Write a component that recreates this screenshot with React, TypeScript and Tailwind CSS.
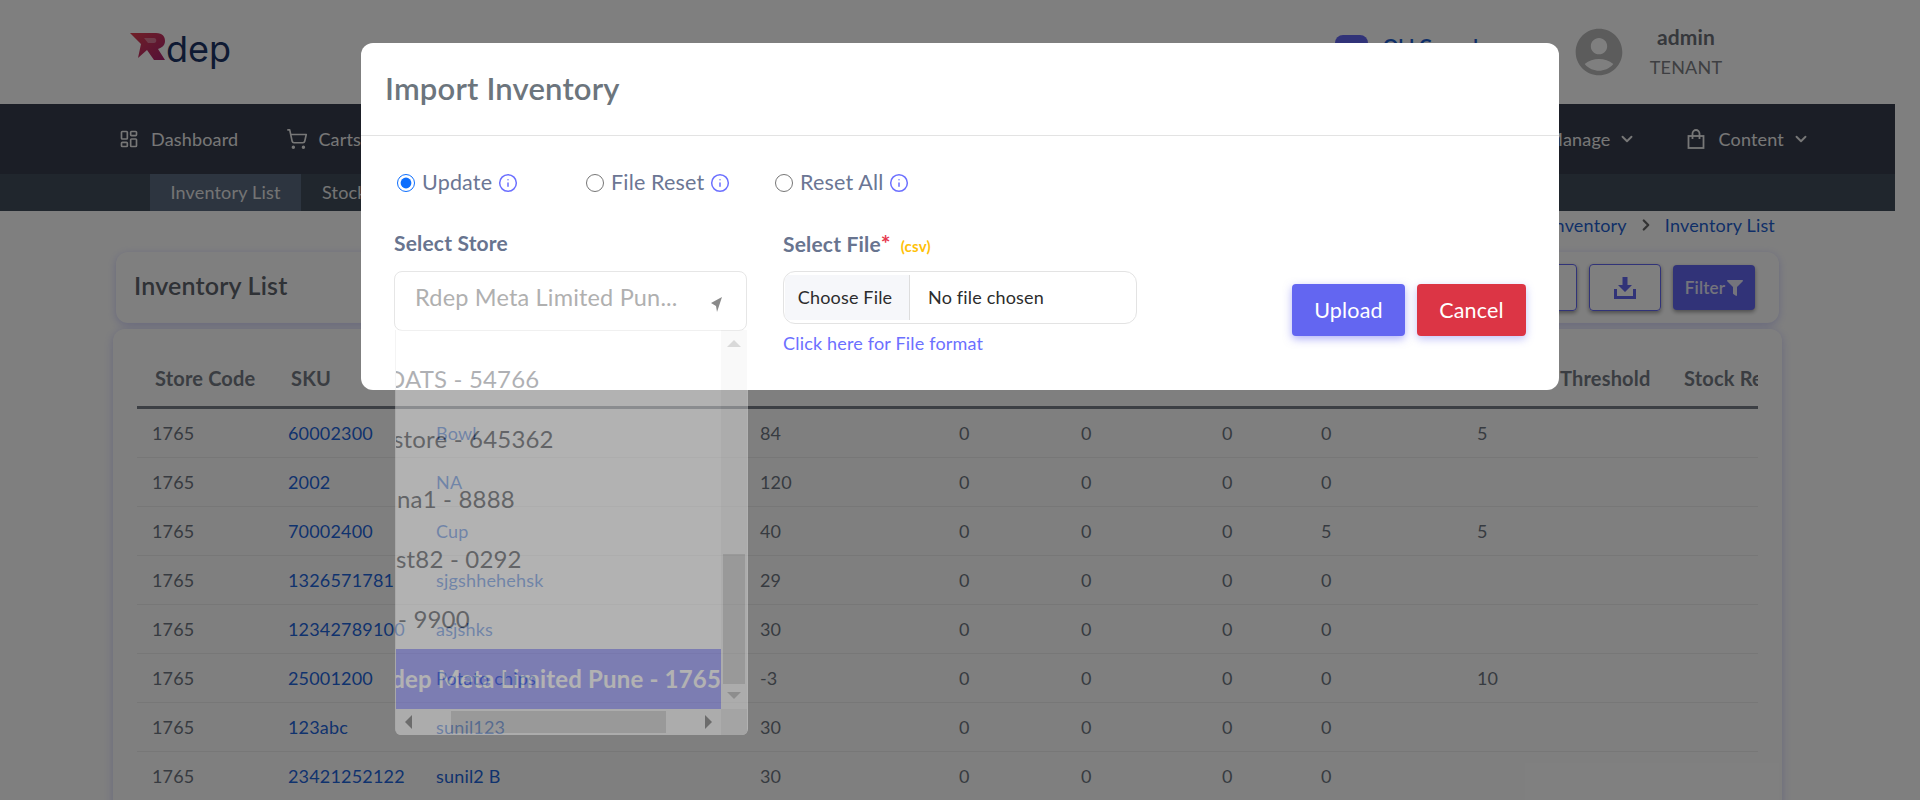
import { ChevronDown, ChevronRight, Info, LayoutDashboard, ShoppingCart } from "lucide-react";
import { FaFilter } from "react-icons/fa";
import { MdAccountCircle } from "react-icons/md";

const rows = [
  ["1765", "60002300", "Bowl", "84", "0", "0", "0", "0", "5"],
  ["1765", "2002", "NA", "120", "0", "0", "0", "0", ""],
  ["1765", "70002400", "Cup", "40", "0", "0", "0", "5", "5"],
  ["1765", "1326571781", "sjgshhehehsk", "29", "0", "0", "0", "0", ""],
  ["1765", "12342789100", "asjshks", "30", "0", "0", "0", "0", ""],
  ["1765", "25001200", "Potato chips", "-3", "0", "0", "0", "0", "10"],
  ["1765", "123abc", "sunil123", "30", "0", "0", "0", "0", ""],
  ["1765", "23421252122", "sunil2 B", "30", "0", "0", "0", "0", ""],
];

const headers = [
  { label: "Store Code", cls: "pl-[18px]" },
  { label: "SKU", cls: "pl-[18px]" },
  { label: "Product Name", cls: "pl-[18px]" },
  { label: "Quantity", cls: "pl-[18px]" },
  { label: "Reserved", cls: "pl-[18px]" },
  { label: "Damaged", cls: "pl-[18px]" },
  { label: "Sold", cls: "pl-[18px]" },
  { label: "Hold", cls: "pl-[18px]" },
  { label: "Threshold", cls: "pl-[98px]" },
  { label: "Stock Reorder", cls: "pl-[13px]" },
];

const gridCols = "grid grid-cols-[136px_148px_324px_199px_122px_141px_99px_156px_209px_87px]";

function BagIcon() {
  return (
    <svg viewBox="0 0 18 20" className="w-[18px] h-[20px]" fill="none" stroke="currentColor" strokeWidth="1.8">
      <rect x="1.5" y="7" width="15" height="12" />
      <path d="M5.5 10V4.5a3.5 3.5 0 0 1 7 0V10" />
    </svg>
  );
}

function NavBar() {
  return (
    <div className="h-[70px] bg-[#363c4c] text-[#eeeeee] flex items-center pl-[119px] pr-[85px]">
      <LayoutDashboard size={20} strokeWidth={2} className="mr-[12px]" />
      <span>Dashboard</span>
      <ShoppingCart size={22} strokeWidth={1.8} className="ml-[48px] mr-[10px]" />
      <span>Carts</span>
      <span className="ml-auto">Manage</span>
      <ChevronDown size={18} strokeWidth={2.5} className="ml-[8px]" />
      <span className="ml-[51px] mr-[13px] text-[#eeeeee]">
        <BagIcon />
      </span>
      <span>Content</span>
      <ChevronDown size={18} strokeWidth={2.5} className="ml-[8px]" />
    </div>
  );
}

function TopHeader() {
  return (
    <div className="h-[104px] flex items-center pl-[130px]">
      <div className="flex items-start h-[40px] -mt-[3px]">
        <svg viewBox="0 0 36 27" className="w-[36px] h-[27px] mt-[2px]">
          <defs>
            <linearGradient id="mark" x1="0" y1="0" x2="1" y2="1">
              <stop offset="0" stopColor="#e2404e" />
              <stop offset="1" stopColor="#a8206e" />
            </linearGradient>
          </defs>
          <path
            d="M0 0H26C33 0 35 4 35 8C35 13 31 15 28 16L35 27H24L17 17L8 25L11 11Z"
            fill="url(#mark)"
          />
          <path d="M14 5H24C27 5 27 10 24 10H18Z" fill="#ffffff" fillOpacity="0.35" />
        </svg>
        <span className="text-[#1c3466] text-[36px] leading-[37px] tracking-normal font-['Inter',sans-serif] font-normal">dep</span>
      </div>
      <div className="ml-auto flex items-center font-bold pr-[172px]">
        <span className="w-[33px] h-[33px] rounded-lg bg-[#6366f1] mr-[15px] -mt-[1px]" />
        <span className="w-[105px] text-[#1f5fd0] text-[19px] whitespace-nowrap mb-[12px]">Old Console</span>
        <MdAccountCircle size={56} className="text-[#b8b8b8] ml-[83px]" />
        <div className="flex flex-col items-center ml-[22px] w-[74px]">
          <span className="text-[21px] leading-[28px] text-[#6d7178]">admin</span>
          <span className="font-normal text-[#7d7f84] mt-[3px]">TENANT</span>
        </div>
      </div>
    </div>
  );
}

function SubNav() {
  return (
    <div className="h-[37px] bg-[#404c5a] text-[#e8e8e8] flex pl-[150px]">
      <span className="h-full w-[151px] bg-[#5a6a80] flex items-center justify-center">Inventory List</span>
      <span className="h-full flex items-center pl-[21px]">Stock</span>
    </div>
  );
}

function ToolCard() {
  return (
    <div className="ml-[116px] w-[1663px] h-[71px] mt-[9px] rounded-xl bg-white shadow-[0_2px_8px_rgba(99,102,241,0.3)] flex items-center pl-[18px] pr-[24px]">
      <span className="text-[25px] font-semibold text-[#5f646c] -mt-[3px]">Inventory List</span>
      <div className="ml-auto flex items-center gap-[12px]">
        <span className="w-[72px] h-[47px] rounded border border-[#6366f1] shadow-[0_2px_4px_rgba(0,0,0,0.4)]" />
        <span className="w-[72px] h-[47px] rounded border border-[#6366f1] shadow-[0_2px_4px_rgba(0,0,0,0.4)] flex items-center justify-center text-[#6366f1]">
          <svg viewBox="0 0 24 24" className="w-[24px] h-[24px]" fill="currentColor">
            <path d="M9.5 1h5v8h4.5L12 16 5 9h4.5Z" />
            <path d="M1 13h3v7h16v-7h3v10H1Z" />
          </svg>
        </span>
        <span className="w-[82px] h-[45px] rounded bg-[#6366f1] shadow-[0_2px_4px_rgba(0,0,0,0.4)] text-[#e8e8f8] text-[17px] font-semibold flex items-center justify-center gap-[2px]">
          Filter
          <FaFilter size={16} />
        </span>
      </div>
    </div>
  );
}

function InventoryTable() {
  return (
    <div className="ml-[113px] w-[1669px] h-[600px] mt-[6px] rounded-xl bg-white shadow-[0_2px_10px_rgba(99,102,241,0.3)] pl-[24px]">
      <div className="w-[1621px] overflow-hidden">
        <div className={`${gridCols} h-[80px] items-end pb-[13px] border-b-[3px] border-[#787e88] font-bold text-[20px] text-[#747a84] whitespace-nowrap`}>
          {headers.map((h) => (
            <span key={h.label} className={h.cls}>
              {h.label}
            </span>
          ))}
        </div>
        {rows.map((row) => (
          <div key={row[1]} className={`${gridCols} h-[49px] items-center border-b border-[#eeeeee] text-[#6f7782]`}>
            {row.map((cell, i) => (
              <span key={i} className={i === 1 || i === 2 ? "pl-[15px] text-[#1f66dc] whitespace-nowrap" : "pl-[15px]"}>
                {cell}
              </span>
            ))}
          </div>
        ))}
      </div>
    </div>
  );
}

const options = [
  { label: "OATS - 54766", cls: "-ml-[10px]" },
  { label: "store - 645362", cls: "-ml-[3px]" },
  { label: "na1 - 8888", cls: "ml-px" },
  { label: "st82 - 0292", cls: "" },
  { label: "- 9900", cls: "ml-[2px]" },
];

function StoreDropdown() {
  return (
    <div className="absolute top-full left-0 w-[353px] h-[405px] bg-white opacity-40 rounded-b-md overflow-hidden flex flex-col border-l border-[#e6e6e6]">
      <div className="flex h-[379px]">
        <div className="w-[325px] flex flex-col justify-end overflow-hidden text-[24px] text-[#3a3d45] whitespace-nowrap">
          {options.map((o) => (
            <div key={o.label} className="h-[60px] shrink-0 flex items-center">
              <span className={o.cls}>{o.label}</span>
            </div>
          ))}
          <div className="h-[60px] shrink-0 flex items-center justify-end bg-[#7a7bff] text-white font-bold">
            <span className="shrink-0">Rdep Meta Limited Pune - 1765</span>
          </div>
        </div>
        <div className="w-[26px] bg-[#f1f1f1] relative pt-[224px] px-[2px]">
          <span className="absolute left-[6px] top-[10px] border-x-[7px] border-x-transparent border-b-[7px] border-b-[#a3a3a3]" />
          <div className="h-[130px] bg-[#c1c1c1]" />
          <span className="absolute left-[6px] bottom-[10px] border-x-[7px] border-x-transparent border-t-[7px] border-t-[#a3a3a3]" />
        </div>
      </div>
      <div className="flex h-[26px]">
        <div className="w-[325px] bg-[#f1f1f1] relative pl-[55px] py-[2px]">
          <span className="absolute left-[9px] top-[6px] border-y-[7px] border-y-transparent border-r-[7px] border-r-[#505050]" />
          <div className="w-[215px] h-full bg-[#c1c1c1]" />
          <span className="absolute right-[9px] top-[6px] border-y-[7px] border-y-transparent border-l-[7px] border-l-[#505050]" />
        </div>
        <div className="w-[26px] bg-[#dcdcdc]" />
      </div>
    </div>
  );
}

function RadioOption({ label, checked }: { label: string; checked?: boolean }) {
  return (
    <label className="w-[189px] flex items-center text-[21.5px] leading-[27px] text-[#6b7694]">
      <input type="radio" name="mode" defaultChecked={checked} className="w-[18px] h-[18px] m-0 accent-[#0d6efd]" />
      <span className="ml-[7px]">{label}</span>
      <Info size={20} strokeWidth={1.8} className="ml-[6px] text-[#6c70ff]" />
    </label>
  );
}

function ImportModal() {
  return (
    <div className="absolute left-[361px] top-[43px] w-[1198px] h-[347px] bg-white rounded-xl">
      <div className="h-[93px] border-b border-[#e3e3e3] flex items-center pl-[24px]">
        <h2 className="text-[31px] font-semibold text-[#6c757d] -mt-[2px]">Import Inventory</h2>
      </div>
      <div className="flex pl-[36px] pt-[33px]">
        <RadioOption label="Update" checked />
        <RadioOption label="File Reset" />
        <RadioOption label="Reset All" />
      </div>
      <div className="flex pl-[33px] pt-[33px]">
        <div className="w-[353px] mr-[36px]">
          <div className="text-[21px] font-bold text-[#68748f] h-[28px] leading-[28px]">Select Store</div>
          <div className="relative mt-[14px] h-[60px] border border-[#e6e6e6] rounded-lg flex items-center pl-[20px] pb-[6px] text-[23.5px] text-[#b0b0b0] whitespace-nowrap">
            <span>Rdep Meta Limited Pun...</span>
            <svg viewBox="0 0 11 15" className="absolute right-[24px] top-[25px] w-[11px] h-[15px]" fill="#8a8a8a">
              <path d="M11 0 0 6 5 9 6 15Z" />
            </svg>
            <StoreDropdown />
          </div>
        </div>
        <div className="w-[354px]">
          <div className="h-[28px] leading-[28px] text-[21px] font-bold text-[#68748f] whitespace-nowrap">
            Select File<span className="text-[#e63950] text-[23px]">*</span>
            <span className="ml-[10px] text-[15px] text-[#ffc107]">(csv)</span>
          </div>
          <div className="mt-[14px] h-[53px] border border-[#e3e3e3] rounded-xl flex items-center overflow-hidden text-[#2c2c2c] px-px">
            <span className="w-[125px] h-[45px] bg-[#f6f7fa] border-r border-[#dddddd] flex items-center justify-center pr-[4px]">Choose File</span>
            <span className="ml-[18px]">No file chosen</span>
          </div>
          <div className="mt-[6px] text-[#6c70ff]">Click here for File format</div>
        </div>
        <div className="flex gap-[12px] ml-[155px] mt-[55px] text-[21.5px] text-white">
          <span className="w-[113px] h-[52px] rounded bg-[#6366f1] shadow-[0_3px_8px_rgba(99,102,241,0.5)] flex items-center justify-center">Upload</span>
          <span className="w-[109px] h-[52px] rounded bg-[#dc3545] shadow-[0_3px_8px_rgba(99,102,241,0.4)] flex items-center justify-center">Cancel</span>
        </div>
      </div>
    </div>
  );
}

export default function App() {
  return (
    <div className="relative w-full h-[800px] overflow-hidden bg-white text-[18px] tracking-[0.01em] font-['Lato','Noto_Sans',sans-serif]">
      <div className="w-[1895px]">
        <TopHeader />
        <NavBar />
        <SubNav />
        <div className="h-[32px] pb-[4px] flex items-center justify-end pr-[120px] text-[#1f5fd0]">
          <span>Inventory</span>
          <ChevronRight size={18} strokeWidth={3} className="mx-[10px] text-[#666666]" />
          <span>Inventory List</span>
        </div>
        <ToolCard />
        <InventoryTable />
      </div>
      <div className="absolute inset-0 bg-black/50" />
      <ImportModal />
    </div>
  );
}
